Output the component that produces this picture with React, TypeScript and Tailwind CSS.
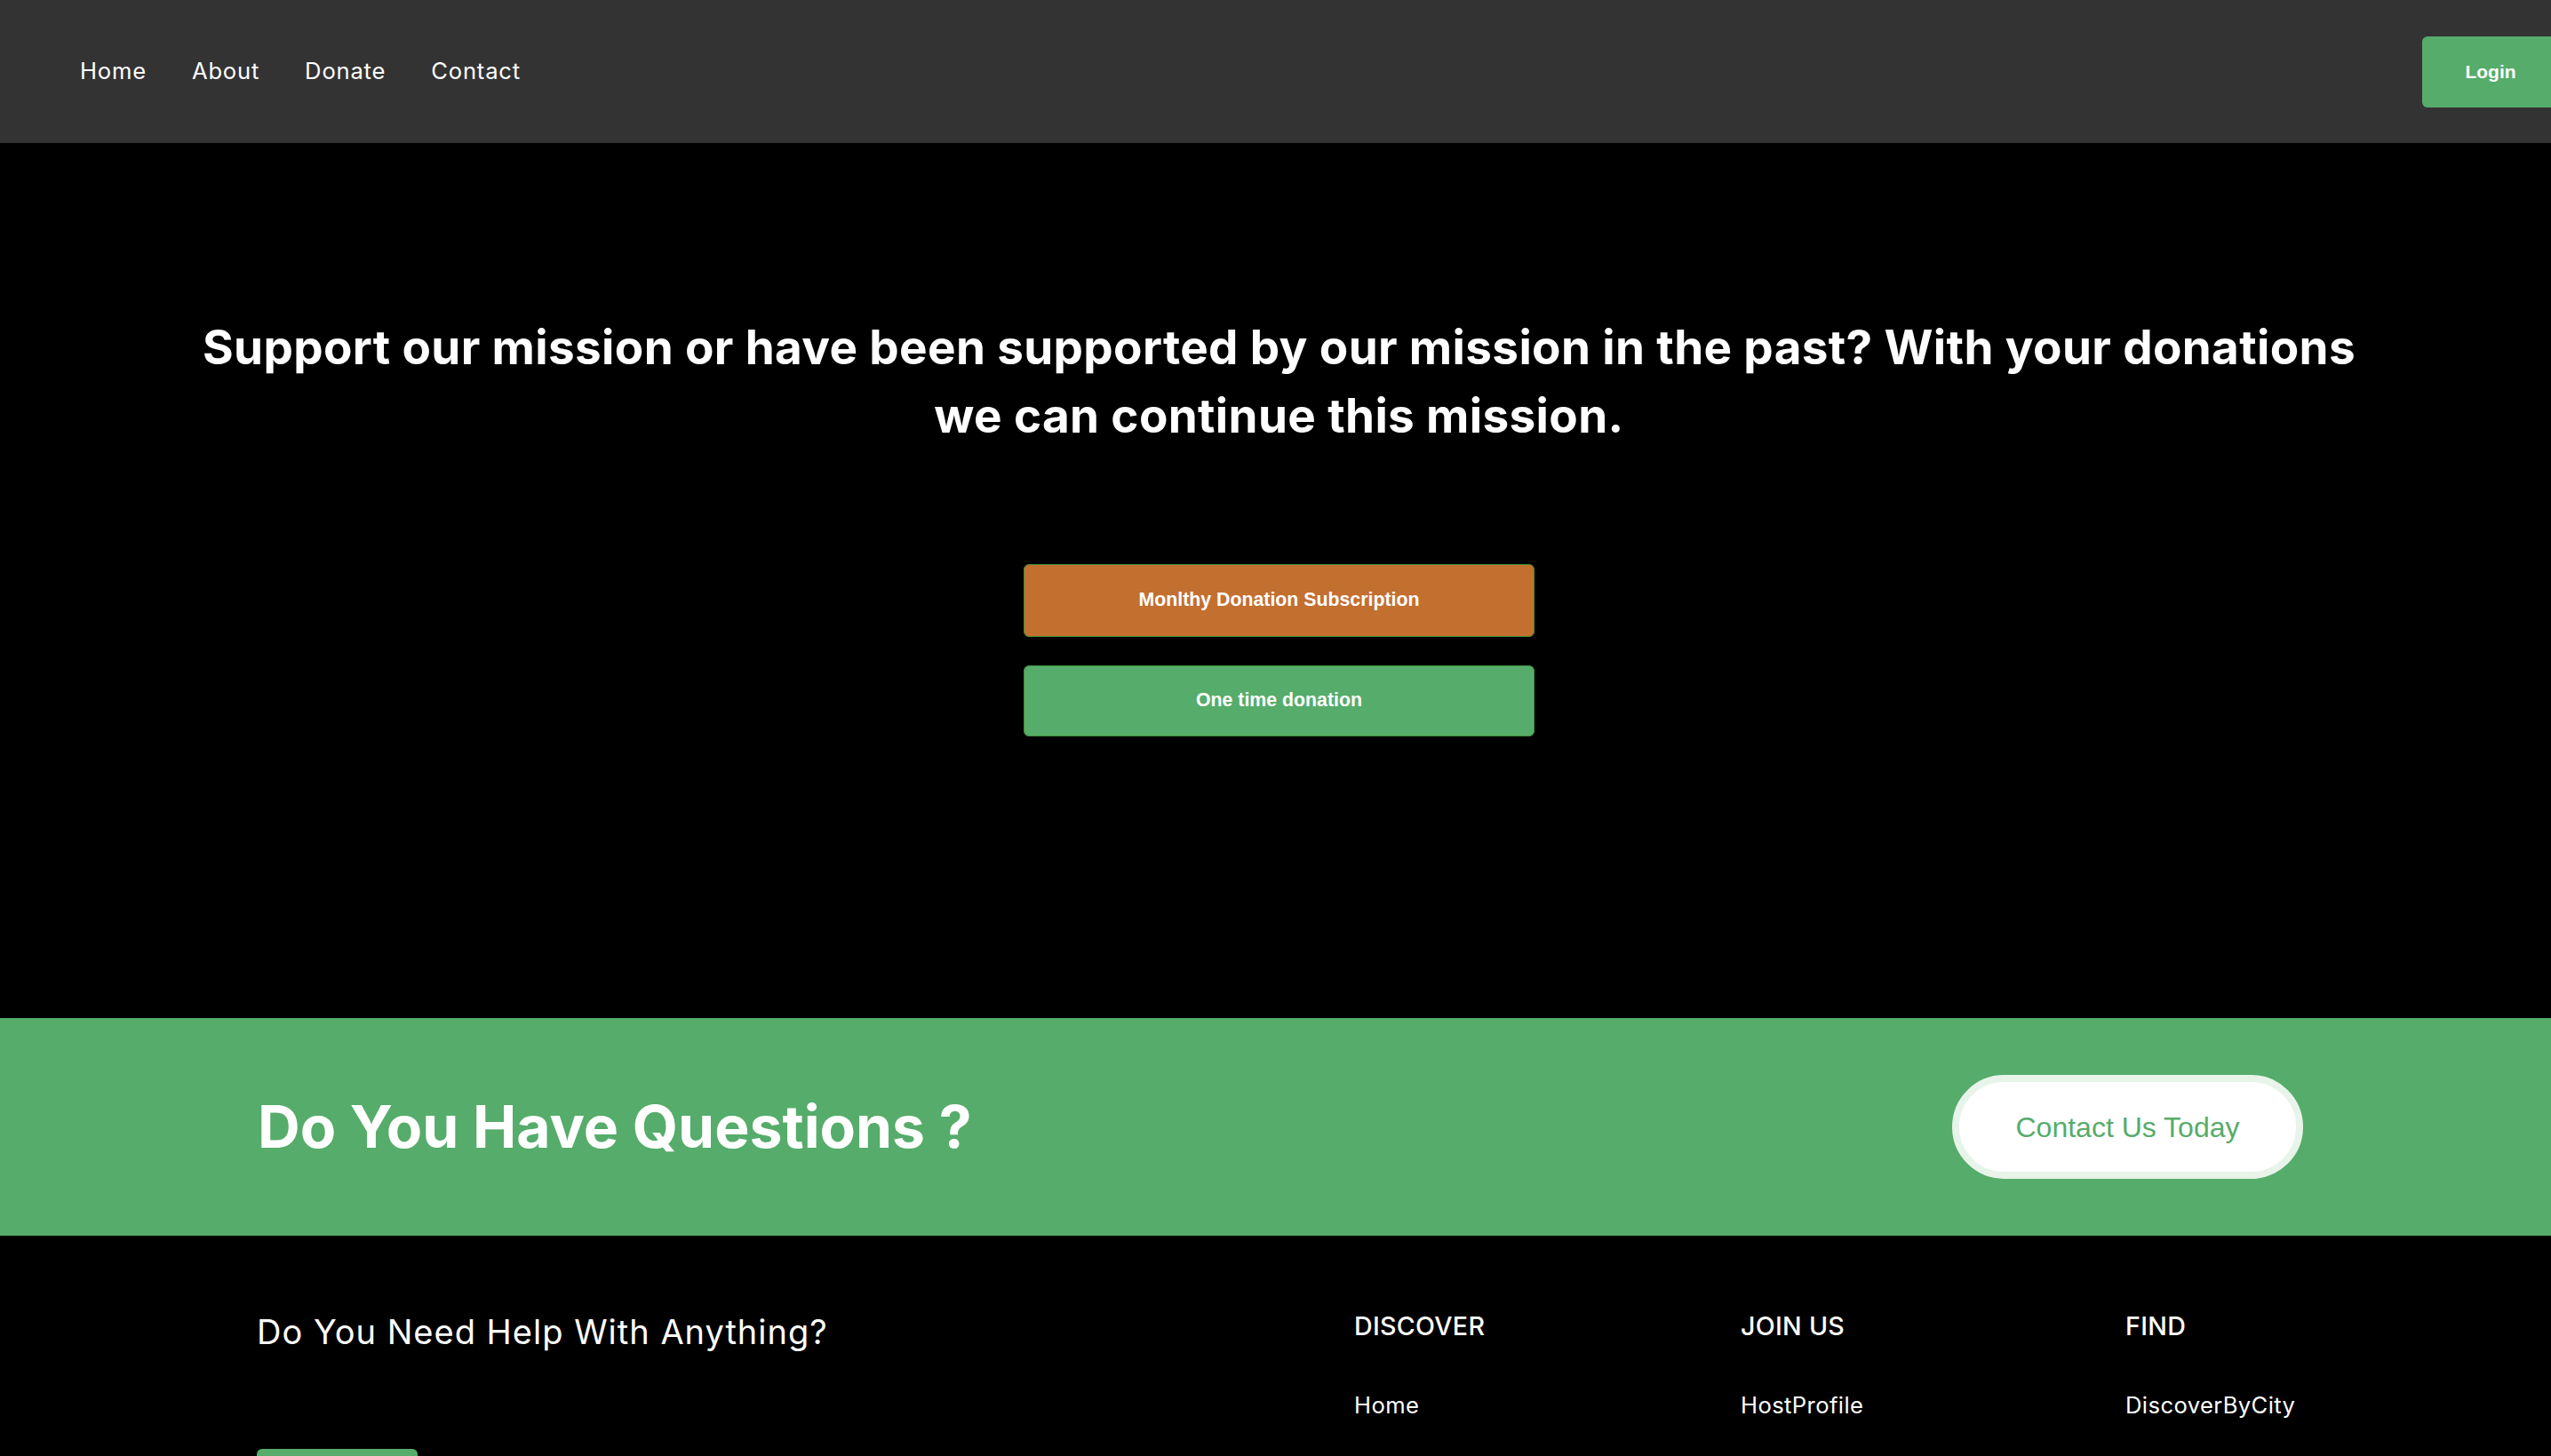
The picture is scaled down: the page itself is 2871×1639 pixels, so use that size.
import React from "react";

const poppins = { fontFamily: "Inter, 'Noto Sans', sans-serif" };
const arial = { fontFamily: "'Liberation Sans', Arial, sans-serif" };

export default function App() {
  return (
    <div className="w-full overflow-x-hidden bg-black text-white" style={poppins}>
      {/* Nav */}
      <nav className="flex h-[161px] items-center justify-between bg-[#333333] pl-[90px]">
        <ul className="flex items-center gap-[51px] text-[25.6px] leading-[1.2] tracking-[0.8px] text-white">
          <li>Home</li>
          <li>About</li>
          <li>Donate</li>
          <li>Contact</li>
        </ul>
        <button
          className="mr-[-9px] flex h-[80px] w-[154px] items-center justify-center rounded-[6px] bg-[#56ac6a] text-[21px] font-bold text-white"
          style={arial}
        >
          Login
        </button>
      </nav>

      {/* Hero */}
      <section className="flex flex-col items-center bg-black pb-[317px] pt-[192px]">
        <h1 className="ml-[8px] text-center text-[53px] font-bold leading-[77px] tracking-[0.36px] text-white">
          Support our mission or have been supported by our mission in the past? With your donations
          <br />
          we can continue this mission.
        </h1>
        <div className="ml-[8px] mt-[128px] flex flex-col gap-[32px]" style={arial}>
          <button className="flex h-[82px] w-[575px] items-center justify-center rounded-[6px] border border-[#3f8f36] bg-[#c36f30] text-[21.3px] font-bold text-white">
            Monlthy Donation Subscription
          </button>
          <button className="flex h-[80px] w-[575px] items-center justify-center rounded-[6px] border border-[#3f8f36] bg-[#56ac6a] text-[21.3px] font-bold text-white">
            One time donation
          </button>
        </div>
      </section>

      {/* Questions banner */}
      <section className="flex h-[245px] items-center justify-between bg-[#56ac6a] pl-[290px] pr-[279px]">
        <h2 className="text-[66px] font-bold leading-[1.2] text-white">Do You Have Questions ?</h2>
        <button
          className="flex h-[117px] w-[395px] items-center justify-center rounded-full border-[8px] border-[#e8f4ea] bg-white text-[32px] text-[#56ac6a]"
          style={arial}
        >
          Contact Us Today
        </button>
      </section>

      {/* Footer */}
      <footer className="flex bg-black pb-[80px] pl-[289px] pr-[45px] pt-[85px]">
        <div className="flex-1">
          <h3 className="mt-[1px] text-[38px] leading-[1.2] tracking-[1px] text-white">
            Do You Need Help With Anything?
          </h3>
          <button className="mt-[108px] h-[60px] w-[181px] rounded-[6px] bg-[#56ac6a]" />
        </div>
        <div className="flex">
          <div className="w-[435px]">
            <h4 className="text-[28.6px] font-medium leading-[1.2] tracking-[0.3px]">DISCOVER</h4>
            <ul className="mt-[57px] flex flex-col text-[25.6px] leading-[1.2] tracking-[0.4px]">
              <li>Home</li>
            </ul>
          </div>
          <div className="w-[433px]">
            <h4 className="text-[28.6px] font-medium leading-[1.2] tracking-[0.3px]">JOIN US</h4>
            <ul className="mt-[57px] flex flex-col text-[25.6px] leading-[1.2] tracking-[0.4px]">
              <li>HostProfile</li>
            </ul>
          </div>
          <div className="w-[434px]">
            <h4 className="text-[28.6px] font-medium leading-[1.2] tracking-[0.3px]">FIND</h4>
            <ul className="mt-[57px] flex flex-col text-[25.6px] leading-[1.2] tracking-[0.4px]">
              <li>DiscoverByCity</li>
            </ul>
          </div>
        </div>
      </footer>
    </div>
  );
}
